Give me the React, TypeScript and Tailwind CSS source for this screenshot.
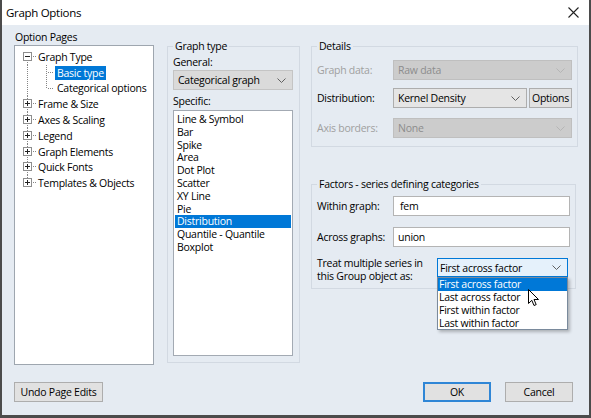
import React from "react";

const Chevron = ({ c = "#606060" }: { c?: string }) => (
  <svg width="9" height="5" viewBox="0 0 9 5" className="shrink-0">
    <path d="M0.5 0.5L4.5 4.5L8.5 0.5" fill="none" stroke={c} strokeWidth="1" />
  </svg>
);

const DOT = "#858585";

const Dots = ({ x, y0, y1 }: { x: number; y0: number; y1: number }) => {
  const r: React.ReactElement[] = [];
  for (let y = y0; y < y1; y += 2) r.push(<rect key={y} x={x} y={y} width="1" height="1" fill={DOT} />);
  return <>{r}</>;
};

const RootRow = ({ label, expanded, first, last }: { label: string; expanded?: boolean; first?: boolean; last?: boolean }) => (
  <div className="flex items-center h-[15.8px]">
    <svg width="23" height="16" viewBox="0 0 23 16" shapeRendering="crispEdges" className="shrink-0 overflow-visible">
      {!first && <Dots x={12} y0={0} y1={3} />}
      {!last && <Dots x={12} y0={13} y1={16} />}
      <rect x="18" y="7" width="1" height="1" fill={DOT} />
      <rect x="20" y="7" width="1" height="1" fill={DOT} />
      <rect x="8" y="3" width="9" height="9" fill="#8e8e8e" />
      <rect x="9" y="4" width="7" height="7" fill="#fff" />
      <rect x="10" y="7" width="5" height="1" fill="#222" />
      {!expanded && <rect x="12" y="5" width="1" height="5" fill="#222" />}
    </svg>
    <span className="whitespace-nowrap">{label}</span>
  </div>
);

const ChildRow = ({ label, selected, last }: { label: string; selected?: boolean; last?: boolean }) => (
  <div className="flex items-center h-[15.8px]">
    <svg width="40" height="16" viewBox="0 0 40 16" shapeRendering="crispEdges" className="shrink-0 overflow-visible">
      <Dots x={12} y0={0} y1={16} />
      <Dots x={31} y0={0} y1={last ? 8 : 16} />
      <rect x="33" y="7" width="1" height="1" fill={DOT} />
      <rect x="35" y="7" width="1" height="1" fill={DOT} />
      <rect x="37" y="7" width="1" height="1" fill={DOT} />
    </svg>
    <span className={"px-[2px] leading-[14px] whitespace-nowrap " + (selected ? "bg-[#0078d7] text-white" : "")}>{label}</span>
  </div>
);

const Select = ({ value, disabled, className = "", bg = "bg-[#e5e5e5]" }: { value: string; disabled?: boolean; className?: string; bg?: string }) => (
  <div
    className={
      "h-[20px] flex items-center justify-between pl-[4px] pr-[6px] border " +
      (disabled ? "bg-[#cccccc] border-[#bfbfbf] text-[#8d8d8d] " : bg + " border-[#adadad] text-black ") +
      className
    }
  >
    <span className="whitespace-nowrap">{value}</span>
    <Chevron c={disabled ? "#b5b5b5" : "#606060"} />
  </div>
);

const Button = ({ label, className = "" }: { label: string; className?: string }) => (
  <div className={"h-[20px] flex items-center justify-center bg-[#e1e1e1] border " + className}>{label}</div>
);

const specific = [
  "Line & Symbol",
  "Bar",
  "Spike",
  "Area",
  "Dot Plot",
  "Scatter",
  "XY Line",
  "Pie",
  "Distribution",
  "Quantile - Quantile",
  "Boxplot",
];

export default function App() {
  return (
    <div className="w-[591px] h-[418px] bg-[#4b4b4b] pl-[2px] font-['Open_Sans',sans-serif] text-[10.5px] tracking-[-0.25px] text-black leading-[14px]">
      <div className="w-[587px] h-[415px] flex flex-col bg-[#e5ebf2]">
        {/* title bar */}
        <div className="h-[25px] shrink-0 bg-white flex items-center justify-between pl-[4px] pr-[10px]">
          <span className="text-[11.5px] tracking-[-0.3px]">Graph Options</span>
          <svg width="11" height="11" viewBox="0 0 11 11">
            <path d="M0.5 0.5L10.5 10.5M10.5 0.5L0.5 10.5" stroke="#222" strokeWidth="1.1" />
          </svg>
        </div>

        {/* body */}
        <div className="flex-1 flex flex-col pt-[5px] pl-[12px] pr-[16px]">
          <div className="flex items-start">
            {/* Option pages */}
            <div className="w-[140px] shrink-0 flex flex-col">
              <div className="h-[15px] leading-[15px] pl-[1px]">Option Pages</div>
              <div className="h-[320px] bg-white border border-[#9ea6af] pt-[3px]">
                <RootRow label="Graph Type" expanded first />
                <ChildRow label="Basic type" selected />
                <ChildRow label="Categorical options" last />
                <RootRow label="Frame & Size" />
                <RootRow label="Axes & Scaling" />
                <RootRow label="Legend" />
                <RootRow label="Graph Elements" />
                <RootRow label="Quick Fonts" />
                <RootRow label="Templates & Objects" last />
              </div>
            </div>

            {/* Graph type */}
            <fieldset className="ml-[13px] mt-[9px] w-[133px] h-[324px] shrink-0 border border-[#d2d9e2] pl-[5px] pr-[6px] pt-[2px]">
              <legend className="px-[2px] leading-[14px]">Graph type</legend>
              <div className="leading-[14px]">General:</div>
              <Select value="Categorical graph" bg="bg-[#dadada]" className="mt-[1px] border-[#c4c4c4]" />
              <div className="mt-[4px] leading-[14px]">Specific:</div>
              <div className="mt-[2px] h-[246px] bg-white border border-[#a3aab3] pt-[2px] px-[1px]">
                {specific.map((s) => (
                  <div
                    key={s}
                    className={
                      "h-[12.8px] leading-[12.8px] px-[2px] whitespace-nowrap " +
                      (s === "Distribution" ? "bg-[#0078d7] text-white" : "")
                    }
                  >
                    {s}
                  </div>
                ))}
              </div>
            </fieldset>

            {/* right column */}
            <div className="ml-[11px] w-[265px] shrink-0 flex flex-col">
              <fieldset className="mt-[9px] h-[108px] border border-[#d2d9e2] pl-[5px] pr-[5px] pt-[7px]">
                <legend className="px-[2px] leading-[14px]">Details</legend>
                <div className="flex items-center">
                  <span className="w-[76px] text-[#a0a0a0]">Graph data:</span>
                  <Select value="Raw data" disabled className="flex-1" />
                </div>
                <div className="flex items-center mt-[8px]">
                  <span className="w-[76px]">Distribution:</span>
                  <Select value="Kernel Density" className="w-[134px]" />
                  <Button label="Options" className="ml-[2px] w-[43px] border-[#adadad]" />
                </div>
                <div className="flex items-center mt-[10px]">
                  <span className="w-[76px] text-[#a0a0a0]">Axis borders:</span>
                  <Select value="None" disabled className="flex-1" />
                </div>
              </fieldset>

              <fieldset className="mt-[30px] h-[112px] border border-[#d2d9e2] pl-[5px] pr-[5px] pt-[5px]">
                <legend className="px-[2px] leading-[14px]">Factors - series defining categories</legend>
                <div className="flex items-center">
                  <span className="w-[76px]">Within graph:</span>
                  <div className="flex-1 h-[20px] bg-white border border-[#b4b4b4] flex items-center pl-[6px]">fem</div>
                </div>
                <div className="flex items-center mt-[11px]">
                  <span className="w-[76px]">Across graphs:</span>
                  <div className="flex-1 h-[20px] bg-white border border-[#b4b4b4] flex items-center pl-[4px]">union</div>
                </div>
                <div className="flex items-start mt-[10px]">
                  <div className="w-[120px] flex flex-col">
                    <span className="h-[12.5px] leading-[12.5px] whitespace-nowrap">Treat multiple series in</span>
                    <span className="h-[12.5px] leading-[12.5px] whitespace-nowrap">this Group object as:</span>
                  </div>
                  <div className="relative w-[131px] mt-[1px]">
                    <div className="h-[19px] flex items-center justify-between pl-[2px] pr-[6px] bg-[#e5f1fb] border border-[#0078d7]">
                      <span className="whitespace-nowrap">First across factor</span>
                      <Chevron />
                    </div>
                    <div className="absolute left-0 top-full w-[131px] h-[53px] bg-white border border-[#7a8a9c] shadow-[2px_2px_3px_rgba(0,0,0,0.25)] z-10">
                      {["First across factor", "Last across factor", "First within factor", "Last within factor"].map((s, i) => (
                        <div
                          key={s}
                          className={"h-[13px] leading-[13px] px-[1px] whitespace-nowrap " + (i === 0 ? "bg-[#0078d7] text-white" : "")}
                        >
                          {s}
                        </div>
                      ))}
                      <svg className="absolute left-[90px] top-[11px]" width="12" height="18" viewBox="0 0 12 18">
                        <path
                          d="M0.5 0.5V14.5L3.8 11.3L6 16.5L8.2 15.6L6 10.5H10.5Z"
                          fill="#fff"
                          stroke="#000"
                          strokeWidth="1"
                          strokeLinejoin="miter"
                        />
                      </svg>
                    </div>
                  </div>
                </div>
              </fieldset>
            </div>
          </div>

          {/* buttons */}
          <div className="mt-[17px] flex items-center justify-between">
            <Button label="Undo Page Edits" className="w-[89px] border-[#adadad]" />
            <div className="flex items-center gap-[14px]">
              <Button label="OK" className="w-[68px] border-[2px] border-[#2f86d6]" />
              <Button label="Cancel" className="w-[68px] border-[#adadad]" />
            </div>
          </div>
        </div>
      </div>
    </div>
  );
}
